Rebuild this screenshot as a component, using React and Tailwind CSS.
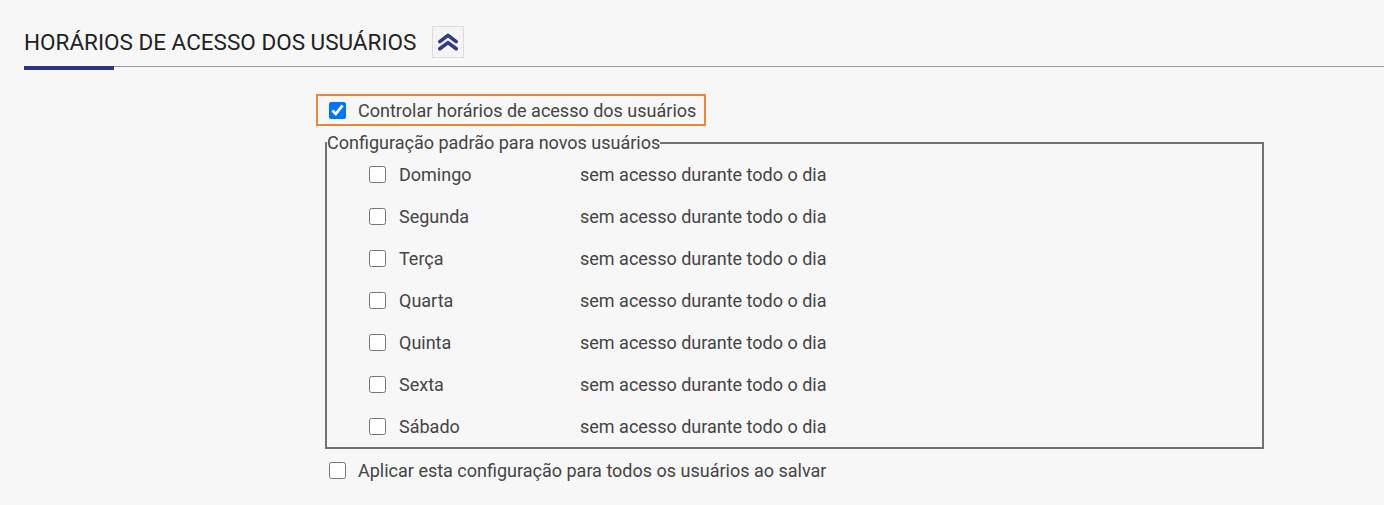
const days = ['Domingo', 'Segunda', 'Terça', 'Quarta', 'Quinta', 'Sexta', 'Sábado'];

// Double chevron (angle-double-up) drawn by hand
function DoubleChevronUp() {
  return (
    <svg width="22" height="18" viewBox="0 0 22 18" fill="none" stroke="#2e3a8c" strokeWidth="3.6" strokeLinecap="round" strokeLinejoin="round">
      <path d="M2.8 8.6 L11 2.4 L19.2 8.6" />
      <path d="M2.8 15.8 L11 9.6 L19.2 15.8" />
    </svg>
  );
}

export default function App() {
  return (
    <div className="min-h-screen bg-[#f7f7f7] font-['Roboto',sans-serif] text-[#444]">
      {/* Section header */}
      <div className="pl-6 pt-[26px]">
        <div className="flex items-center gap-4 h-8">
          <h2 className="text-[22.5px] leading-[32px] text-[#222] uppercase">Horários de acesso dos usuários</h2>
          <button
            type="button"
            className="w-8 h-8 flex items-center justify-center bg-[#f4f4f4] border border-[#dcdcdc]"
          >
            <DoubleChevronUp />
          </button>
        </div>
        <div className="relative mt-2 h-px bg-[#9a9a9a]">
          <div className="absolute left-0 top-0 w-[90px] h-1 bg-[#2b3487]" />
        </div>
      </div>

      {/* Form */}
      <div className="pl-[316px] pt-[27px]">
        <label className="inline-flex items-center gap-3 h-8 pl-[11px] pr-[8px] border-2 border-[#f28533] text-[18px]">
          <input type="checkbox" defaultChecked className="w-[17px] h-[17px] m-0 accent-[#0075ff]" />
          <span>Controlar horários de acesso dos usuários</span>
        </label>

        <fieldset className="ml-[9px] mt-[6px] w-[939px] border-2 border-[#727272]">
          <legend className="text-[18px] leading-[21px]">Configuração padrão para novos usuários</legend>
          <div className="pl-[42px]">
            {days.map((day) => (
              <div key={day} className="flex items-center h-[42px] text-[18px]">
                <input type="checkbox" className="w-[17px] h-[17px] m-0" />
                <span className="ml-[13px] w-[181px]">{day}</span>
                <span>sem acesso durante todo o dia</span>
              </div>
            ))}
          </div>
        </fieldset>

        <label className="flex items-center gap-3 h-8 mt-[5px] pl-[13px] text-[18px]">
          <input type="checkbox" className="w-[17px] h-[17px] m-0" />
          <span>Aplicar esta configuração para todos os usuários ao salvar</span>
        </label>
      </div>
    </div>
  );
}
